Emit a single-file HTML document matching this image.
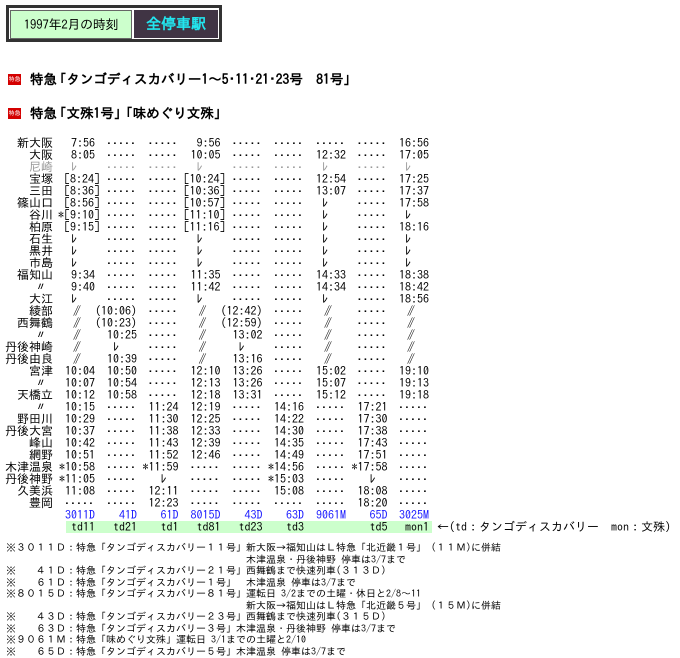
<!DOCTYPE html>
<html><head><meta charset="utf-8"><style>
body{margin:0;background:#fff;width:680px;height:646px;position:relative;overflow:hidden;font-family:"IPAGothic","Liberation Sans","Noto Sans CJK JP",sans-serif;color:#000}
.a{position:absolute}
#box{left:6px;top:5px;width:210px;height:31px;border:3px solid #333}
#g{left:10px;top:10px;width:120px;height:27px;background:#ccffcc;border:1px solid #666;font-size:13px;line-height:27px;text-align:center;letter-spacing:-0.3px}
#p{left:134px;top:10px;width:84px;height:28px;background:#403444;color:#22e6f0;font-weight:bold;font-size:15px;line-height:27px;text-align:center;border-right:1px solid #fff;border-bottom:1px solid #fff}
.h{left:8px;font-size:13.5px;font-weight:bold;line-height:16px;white-space:pre}
.ic{display:inline-block;width:13px;height:11px;background:#d40000;color:#fff;font-size:6px;line-height:11px;text-align:center;vertical-align:middle;margin-right:9px;font-weight:normal;position:relative;top:-1px}
.ql{margin-left:-4px}.qr{margin-right:-4px}
table{position:absolute;left:0;top:137px;border-collapse:collapse;table-layout:fixed;font-size:12px;line-height:12px}
tr{height:12px}
td{padding:0;white-space:pre;text-align:right;height:12px;max-height:12px;overflow:visible;line-height:12px}
.d{position:relative;top:-3px}
.w{letter-spacing:-4px}
.gr td{color:#999}
.bl td{color:#1a1aff}
.o{margin-right:-5px}
#band{left:66px;top:521px;width:366px;height:12px;background:#ccffcc}
#arr{left:437px;top:521px;font-size:12px;line-height:12px;white-space:pre}
#notes{left:6px;top:543px;font-size:10px;line-height:11.5px;white-space:pre}
</style></head><body>
<div class="a" id="box"></div>
<div class="a" id="g">1997年2月の時刻</div>
<div class="a" id="p">全停車駅</div>
<div class="a h" style="top:71px"><span class="ic">特急</span>特急<span class="ql">「</span>タンゴディスカバリー1～5･11･21･23号　81号<span class="qr">」</span></div>
<div class="a h" style="top:105px"><span class="ic">特急</span>特急<span class="ql">「</span>文殊1号<span class="qr">」</span><span class="ql">「</span>味めぐり文殊<span class="qr">」</span></div>
<div class="a" id="band"></div>
<table>
<colgroup><col style="width:53px"><col style="width:42px"><col style="width:41.5px"><col style="width:41.5px"><col style="width:42px"><col style="width:41.5px"><col style="width:41.5px"><col style="width:42px"><col style="width:41.5px"><col style="width:41.5px"></colgroup>
<tr><td>新大阪</td><td>7:56</td><td><span class="d">.....</span></td><td><span class="d">.....</span></td><td>9:56</td><td><span class="d">.....</span></td><td><span class="d">.....</span></td><td><span class="d">.....</span></td><td><span class="d">.....</span></td><td>16:56</td></tr>
<tr><td>大阪</td><td>8:05</td><td><span class="d">.....</span></td><td><span class="d">.....</span></td><td>10:05</td><td><span class="d">.....</span></td><td><span class="d">.....</span></td><td>12:32</td><td><span class="d">.....</span></td><td>17:05</td></tr>
<tr class="gr"><td>尼崎</td><td>ﾚ   </td><td><span class="d">.....</span></td><td><span class="d">.....</span></td><td>ﾚ   </td><td><span class="d">.....</span></td><td><span class="d">.....</span></td><td>ﾚ   </td><td><span class="d">.....</span></td><td>ﾚ   </td></tr>
<tr><td>宝塚</td><td>[8:24<span class="o">]</span></td><td><span class="d">.....</span></td><td><span class="d">.....</span></td><td>[10:24<span class="o">]</span></td><td><span class="d">.....</span></td><td><span class="d">.....</span></td><td>12:54</td><td><span class="d">.....</span></td><td>17:25</td></tr>
<tr><td>三田</td><td>[8:36<span class="o">]</span></td><td><span class="d">.....</span></td><td><span class="d">.....</span></td><td>[10:36<span class="o">]</span></td><td><span class="d">.....</span></td><td><span class="d">.....</span></td><td>13:07</td><td><span class="d">.....</span></td><td>17:37</td></tr>
<tr><td>篠山口</td><td>[8:56<span class="o">]</span></td><td><span class="d">.....</span></td><td><span class="d">.....</span></td><td>[10:57<span class="o">]</span></td><td><span class="d">.....</span></td><td><span class="d">.....</span></td><td>ﾚ   </td><td><span class="d">.....</span></td><td>17:58</td></tr>
<tr><td>谷川</td><td>*[9:10<span class="o">]</span></td><td><span class="d">.....</span></td><td><span class="d">.....</span></td><td>[11:10<span class="o">]</span></td><td><span class="d">.....</span></td><td><span class="d">.....</span></td><td>ﾚ   </td><td><span class="d">.....</span></td><td>ﾚ   </td></tr>
<tr><td>柏原</td><td>[9:15<span class="o">]</span></td><td><span class="d">.....</span></td><td><span class="d">.....</span></td><td>[11:16<span class="o">]</span></td><td><span class="d">.....</span></td><td><span class="d">.....</span></td><td>ﾚ   </td><td><span class="d">.....</span></td><td>18:16</td></tr>
<tr><td>石生</td><td>ﾚ   </td><td><span class="d">.....</span></td><td><span class="d">.....</span></td><td>ﾚ   </td><td><span class="d">.....</span></td><td><span class="d">.....</span></td><td>ﾚ   </td><td><span class="d">.....</span></td><td>ﾚ   </td></tr>
<tr><td>黒井</td><td>ﾚ   </td><td><span class="d">.....</span></td><td><span class="d">.....</span></td><td>ﾚ   </td><td><span class="d">.....</span></td><td><span class="d">.....</span></td><td>ﾚ   </td><td><span class="d">.....</span></td><td>ﾚ   </td></tr>
<tr><td>市島</td><td>ﾚ   </td><td><span class="d">.....</span></td><td><span class="d">.....</span></td><td>ﾚ   </td><td><span class="d">.....</span></td><td><span class="d">.....</span></td><td>ﾚ   </td><td><span class="d">.....</span></td><td>ﾚ   </td></tr>
<tr><td>福知山</td><td>9:34</td><td><span class="d">.....</span></td><td><span class="d">.....</span></td><td>11:35</td><td><span class="d">.....</span></td><td><span class="d">.....</span></td><td>14:33</td><td><span class="d">.....</span></td><td>18:38</td></tr>
<tr><td>〃 </td><td>9:40</td><td><span class="d">.....</span></td><td><span class="d">.....</span></td><td>11:42</td><td><span class="d">.....</span></td><td><span class="d">.....</span></td><td>14:34</td><td><span class="d">.....</span></td><td>18:42</td></tr>
<tr><td>大江</td><td>ﾚ   </td><td><span class="d">.....</span></td><td><span class="d">.....</span></td><td>ﾚ   </td><td><span class="d">.....</span></td><td><span class="d">.....</span></td><td>ﾚ   </td><td><span class="d">.....</span></td><td>18:56</td></tr>
<tr><td>綾部</td><td><span class="w">//</span>   </td><td>(10:06)</td><td><span class="d">.....</span></td><td><span class="w">//</span>   </td><td>(12:42)</td><td><span class="d">.....</span></td><td><span class="w">//</span>   </td><td><span class="d">.....</span></td><td><span class="w">//</span>   </td></tr>
<tr><td>西舞鶴</td><td><span class="w">//</span>   </td><td>(10:23)</td><td><span class="d">.....</span></td><td><span class="w">//</span>   </td><td>(12:59)</td><td><span class="d">.....</span></td><td><span class="w">//</span>   </td><td><span class="d">.....</span></td><td><span class="w">//</span>   </td></tr>
<tr><td>〃 </td><td><span class="w">//</span>   </td><td>10:25</td><td><span class="d">.....</span></td><td><span class="w">//</span>   </td><td>13:02</td><td><span class="d">.....</span></td><td><span class="w">//</span>   </td><td><span class="d">.....</span></td><td><span class="w">//</span>   </td></tr>
<tr><td>丹後神崎</td><td><span class="w">//</span>   </td><td>ﾚ   </td><td><span class="d">.....</span></td><td><span class="w">//</span>   </td><td>ﾚ   </td><td><span class="d">.....</span></td><td><span class="w">//</span>   </td><td><span class="d">.....</span></td><td><span class="w">//</span>   </td></tr>
<tr><td>丹後由良</td><td><span class="w">//</span>   </td><td>10:39</td><td><span class="d">.....</span></td><td><span class="w">//</span>   </td><td>13:16</td><td><span class="d">.....</span></td><td><span class="w">//</span>   </td><td><span class="d">.....</span></td><td><span class="w">//</span>   </td></tr>
<tr><td>宮津</td><td>10:04</td><td>10:50</td><td><span class="d">.....</span></td><td>12:10</td><td>13:26</td><td><span class="d">.....</span></td><td>15:02</td><td><span class="d">.....</span></td><td>19:10</td></tr>
<tr><td>〃 </td><td>10:07</td><td>10:54</td><td><span class="d">.....</span></td><td>12:13</td><td>13:26</td><td><span class="d">.....</span></td><td>15:07</td><td><span class="d">.....</span></td><td>19:13</td></tr>
<tr><td>天橋立</td><td>10:12</td><td>10:58</td><td><span class="d">.....</span></td><td>12:18</td><td>13:31</td><td><span class="d">.....</span></td><td>15:12</td><td><span class="d">.....</span></td><td>19:18</td></tr>
<tr><td>〃 </td><td>10:15</td><td><span class="d">.....</span></td><td>11:24</td><td>12:19</td><td><span class="d">.....</span></td><td>14:16</td><td><span class="d">.....</span></td><td>17:21</td><td><span class="d">.....</span></td></tr>
<tr><td>野田川</td><td>10:29</td><td><span class="d">.....</span></td><td>11:30</td><td>12:25</td><td><span class="d">.....</span></td><td>14:22</td><td><span class="d">.....</span></td><td>17:30</td><td><span class="d">.....</span></td></tr>
<tr><td>丹後大宮</td><td>10:37</td><td><span class="d">.....</span></td><td>11:38</td><td>12:33</td><td><span class="d">.....</span></td><td>14:30</td><td><span class="d">.....</span></td><td>17:38</td><td><span class="d">.....</span></td></tr>
<tr><td>峰山</td><td>10:42</td><td><span class="d">.....</span></td><td>11:43</td><td>12:39</td><td><span class="d">.....</span></td><td>14:35</td><td><span class="d">.....</span></td><td>17:43</td><td><span class="d">.....</span></td></tr>
<tr><td>網野</td><td>10:51</td><td><span class="d">.....</span></td><td>11:52</td><td>12:46</td><td><span class="d">.....</span></td><td>14:49</td><td><span class="d">.....</span></td><td>17:51</td><td><span class="d">.....</span></td></tr>
<tr><td>木津温泉</td><td>*10:58</td><td><span class="d">.....</span></td><td>*11:59</td><td><span class="d">.....</span></td><td><span class="d">.....</span></td><td>*14:56</td><td><span class="d">.....</span></td><td>*17:58</td><td><span class="d">.....</span></td></tr>
<tr><td>丹後神野</td><td>*11:05</td><td><span class="d">.....</span></td><td>ﾚ  </td><td><span class="d">.....</span></td><td><span class="d">.....</span></td><td>*15:03</td><td><span class="d">.....</span></td><td>ﾚ  </td><td><span class="d">.....</span></td></tr>
<tr><td>久美浜</td><td>11:08</td><td><span class="d">.....</span></td><td>12:11</td><td><span class="d">.....</span></td><td><span class="d">.....</span></td><td>15:08</td><td><span class="d">.....</span></td><td>18:08</td><td><span class="d">.....</span></td></tr>
<tr><td>豊岡</td><td><span class="d">.....</span></td><td><span class="d">.....</span></td><td>12:23</td><td><span class="d">.....</span></td><td><span class="d">.....</span></td><td><span class="d">.....</span></td><td><span class="d">.....</span></td><td>18:20</td><td><span class="d">.....</span></td></tr>
<tr class="bl"><td></td><td>3011D</td><td>41D</td><td>61D</td><td>8015D</td><td>43D</td><td>63D</td><td>9061M</td><td>65D</td><td>3025M</td></tr>
<tr><td></td><td>td11</td><td>td21</td><td>td1</td><td>td81</td><td>td23</td><td>td3</td><td></td><td>td5</td><td>mon1</td></tr>
</table>
<div class="a" id="arr">←(td：タンゴディスカバリー　mon：文殊)</div>
<div class="a" id="notes">※３０１１Ｄ：特急「タンゴディスカバリー１１号」新大阪→福知山はＬ特急「北近畿１号」（１１Ｍ)に併結
                                                木津温泉・丹後神野 停車は3/7まで
※　　４１Ｄ：特急「タンゴディスカバリー２１号」西舞鶴まで快速列車(３１３Ｄ)
※　　６１Ｄ：特急「タンゴディスカバリー１号」　木津温泉 停車は3/7まで
※８０１５Ｄ：特急「タンゴディスカバリー８１号」運転日 3/2までの土曜・休日と2/8～11
                                                新大阪→福知山はＬ特急「北近畿５号」（１５Ｍ)に併結
※　　４３Ｄ：特急「タンゴディスカバリー２３号」西舞鶴まで快速列車(３１５Ｄ)
※　　６３Ｄ：特急「タンゴディスカバリー３号」木津温泉・丹後神野 停車は3/7まで
※９０６１Ｍ：特急「味めぐり文殊」運転日 3/1までの土曜と2/10
※　　６５Ｄ：特急「タンゴディスカバリー５号」木津温泉 停車は3/7まで</div>
</body></html>
